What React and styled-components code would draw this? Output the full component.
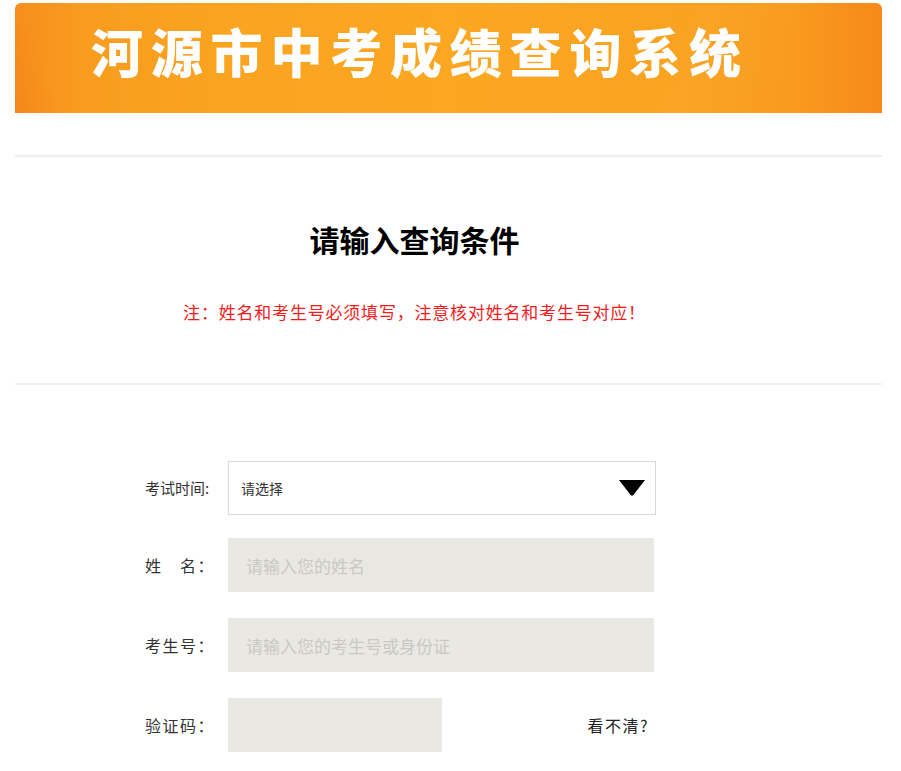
import React from 'react';
import styled, { createGlobalStyle } from 'styled-components';

const GlobalStyle = createGlobalStyle`
  html, body {
    margin: 0;
    padding: 0;
    background: #fff;
  }
  body {
    font-family: "Noto Sans CJK SC", "Liberation Sans", sans-serif;
    color: #333;
  }
  * {
    box-sizing: border-box;
  }
`;

const PageDiv = styled.div`
  width: 867px;
  margin: 3px 0 0 15px;
`;

const BannerDiv = styled.div`
  height: 110px;
  border-radius: 6px 6px 0 0;
  overflow: hidden;
  display: flex;
  align-items: center;
  padding: 0 0 14px 76px;
  background:
    linear-gradient(112deg, rgba(255, 255, 255, 0) 0%, rgba(255, 255, 255, 0) 74%, rgba(255, 190, 80, 0.1) 77%, rgba(255, 255, 255, 0) 88%),
    linear-gradient(72deg, rgba(240, 120, 20, 0.3) 0%, rgba(240, 120, 20, 0) 5%),
    linear-gradient(90deg, #f78e1d 0%, #f99c1f 8%, #faa421 25%, #fba722 50%, #faa321 75%, #f99a1e 90%, #f7891a 100%);

  & > h1 {
    margin: 0;
    color: #fff;
    font-family: "Noto Sans CJK SC", sans-serif;
    font-size: 52px;
    font-weight: 900;
    line-height: 60px;
    letter-spacing: 7.8px;
    white-space: nowrap;
  }
`;

const DividerHr = styled.hr`
  margin: ${({ $top }) => $top}px 0 0;
  border: 0;
  height: 2px;
  background: #f0f0f0;
`;

const HeadingDiv = styled.div`
  padding: 61px 68px 59px 0;
  text-align: center;

  & > h2 {
    margin: 0;
    color: #000;
    font-size: 30px;
    font-weight: 700;
    line-height: 42px;
  }

  & > p {
    margin: 40px 0 0;
    color: #f31c1c;
    font-size: 17px;
    line-height: 24px;
    letter-spacing: 0.8px;
  }
`;

const FormDiv = styled.div`
  padding: 76px 0 0 130px;
`;

const RowDiv = styled.div`
  display: flex;
  align-items: center;
  width: ${({ $wide }) => ($wide ? '511px' : 'auto')};
  justify-content: ${({ $wide }) => ($wide ? 'space-between' : 'flex-start')};
  margin-top: ${({ $top }) => $top || 0}px;
`;

const LabelSpan = styled.span`
  width: 83px;
  flex-shrink: 0;
  color: #333;
  font-size: ${({ $small }) => ($small ? '15px' : '16px')};
  letter-spacing: ${({ $small }) => ($small ? '0' : '1.5px')};
  line-height: 24px;
  white-space: pre;
`;

const SelectDiv = styled.div`
  width: 428px;
  height: 54px;
  display: flex;
  align-items: center;
  justify-content: space-between;
  padding: 0 10px 0 12px;
  border: 1px solid #d9d9d9;
  background: #fff;
  font-size: 14px;
  color: #333;
`;

const InputDiv = styled.div`
  width: ${({ $w }) => $w}px;
  height: 54px;
  display: flex;
  align-items: center;
  padding-left: 18px;
  background: #e9e8e3;
  color: #c9c8c4;
  font-size: 17px;
`;

const FieldDiv = styled.div`
  display: flex;
  align-items: center;
`;

const RefreshSpan = styled.span`
  margin-right: 7px;
  color: #222;
  font-size: 16px;
  letter-spacing: 1.5px;
`;

function Caret() {
  return (
    <svg width="26" height="16" viewBox="0 0 26 16">
      <path d="M0 0 H26 L14 15.5 H12 Z" fill="#000" />
    </svg>
  );
}

export default function App() {
  return (
    <PageDiv>
      <GlobalStyle />
      <BannerDiv>
        <h1>河源市中考成绩查询系统</h1>
      </BannerDiv>
      <DividerHr $top={42} />
      <HeadingDiv>
        <h2>请输入查询条件</h2>
        <p>注：姓名和考生号必须填写，注意核对姓名和考生号对应！</p>
      </HeadingDiv>
      <DividerHr $top={0} />
      <FormDiv>
        <RowDiv>
          <LabelSpan $small>考试时间:</LabelSpan>
          <SelectDiv>
            <span>请选择</span>
            <Caret />
          </SelectDiv>
        </RowDiv>
        <RowDiv $top={23}>
          <LabelSpan>姓　名：</LabelSpan>
          <InputDiv $w={426}>请输入您的姓名</InputDiv>
        </RowDiv>
        <RowDiv $top={26}>
          <LabelSpan>考生号：</LabelSpan>
          <InputDiv $w={426}>请输入您的考生号或身份证</InputDiv>
        </RowDiv>
        <RowDiv $top={26} $wide>
          <FieldDiv>
            <LabelSpan>验证码：</LabelSpan>
            <InputDiv $w={214} />
          </FieldDiv>
          <RefreshSpan>看不清?</RefreshSpan>
        </RowDiv>
      </FormDiv>
    </PageDiv>
  );
}
